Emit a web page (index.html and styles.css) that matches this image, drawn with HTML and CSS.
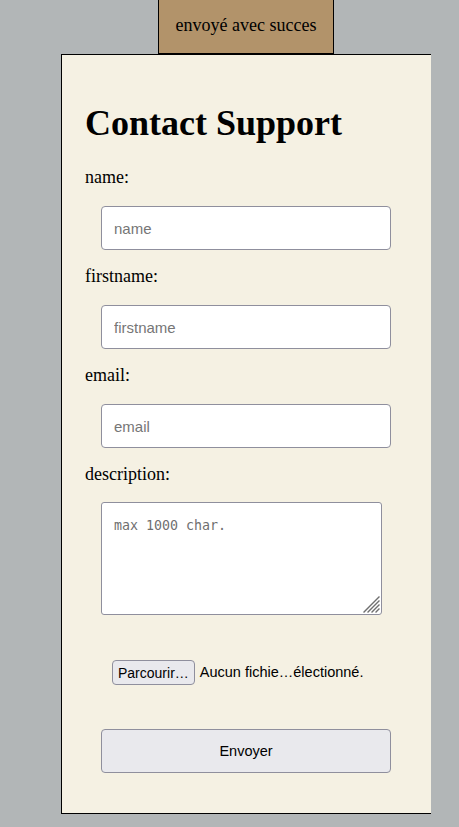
FILE: index.html
```html
<!DOCTYPE html>
<html lang="fr">
<head>
<meta charset="utf-8">
<title>Contact Support</title>
<link rel="stylesheet" href="styles.css">
</head>
<body>
  <div class="toast">envoyé avec succes</div>
  <main class="card">
    <h1 class="title">Contact Support</h1>
    <form class="form" onsubmit="return false">
      <div class="field">
        <label class="label" for="name">name:</label>
        <input class="input" id="name" type="text" placeholder="name">
      </div>
      <div class="field">
        <label class="label" for="firstname">firstname:</label>
        <input class="input" id="firstname" type="text" placeholder="firstname">
      </div>
      <div class="field">
        <label class="label" for="email">email:</label>
        <input class="input" id="email" type="text" placeholder="email">
      </div>
      <div class="field">
        <label class="label label-desc" for="description">description:</label>
        <div class="ta-wrap">
          <textarea class="textarea" id="description" placeholder="max 1000 char."></textarea>
          <svg class="grip" width="18" height="18" viewBox="0 0 18 18" aria-hidden="true">
            <g stroke="#6f6f6f" stroke-width="1.3" stroke-linecap="square">
              <line x1="2" y1="17" x2="17" y2="2"/>
              <line x1="6" y1="17" x2="17" y2="6"/>
              <line x1="10" y1="17" x2="17" y2="10"/>
              <line x1="14" y1="17" x2="17" y2="14"/>
            </g>
          </svg>
        </div>
      </div>
      <div class="file-row">
        <button type="button" class="file-btn">Parcourir…</button>
        <span class="file-name">Aucun fichie…électionné.</span>
      </div>
      <button type="submit" class="submit">Envoyer</button>
    </form>
  </main>
</body>
</html>
```
FILE: styles.css
```css
html, body {
  margin: 0;
  padding: 0;
}

body {
  background: #b2b6b7;
  font-family: "Liberation Serif", "Times New Roman", serif;
  font-size: 18px;
  line-height: 21px;
  color: #000;
  min-height: 827px;
}

.toast {
  margin-left: 158px;
  width: 174px;
  background: #b2936a;
  border: 1px solid #000;
  border-top: 0;
  text-align: center;
  padding: 15px 0 17px;
}

.card {
  display: block;
  margin-left: 61px;
  width: 346px;
  padding: 47px 0 40px 23px;
  background: #f5f1e3;
  border: 1px solid #000;
  border-right: 0;
}

.title {
  font-size: 36px;
  line-height: 42px;
  font-weight: bold;
  margin: 0 0 23px;
}

.form {
  display: flex;
  flex-direction: column;
}

.field {
  display: flex;
  flex-direction: column;
  align-items: flex-start;
}

.label {
  display: block;
  margin-bottom: 18px;
}

.label-desc {
  margin-bottom: 17px;
}

.input {
  display: block;
  margin: 0 0 16px 16px;
  width: 290px;
  height: 44px;
  box-sizing: border-box;
  padding: 0 12px;
  background: #fff;
  border: 1px solid #8f8f9d;
  border-radius: 4px;
  font-family: "Liberation Sans", Arial, sans-serif;
  font-size: 15px;
  color: #000;
  outline: none;
}

.input::placeholder {
  color: #767676;
  opacity: 1;
}

.ta-wrap {
  position: relative;
  margin-left: 16px;
  width: 281px;
  height: 113px;
}

.textarea {
  display: block;
  width: 100%;
  height: 100%;
  box-sizing: border-box;
  margin: 0;
  padding: 15px 12px;
  background: #fff;
  border: 1px solid #8f8f9d;
  border-radius: 3px;
  font-family: "DejaVu Sans Mono", monospace;
  font-size: 13.3px;
  line-height: 15px;
  resize: none;
  outline: none;
}

.textarea::placeholder {
  color: #6f6f6f;
  opacity: 1;
}

.grip {
  position: absolute;
  right: 2px;
  bottom: 2px;
  pointer-events: none;
}

.file-row {
  display: flex;
  align-items: center;
  margin-top: 45px;
  padding-left: 27px;
  font-family: "Liberation Sans", Arial, sans-serif;
  font-size: 14.5px;
}

.file-btn {
  height: 25px;
  box-sizing: border-box;
  padding: 0 5px;
  margin: 0;
  background: #e9e9ed;
  border: 1px solid #8f8f9d;
  border-radius: 4px;
  font-family: "Liberation Sans", Arial, sans-serif;
  font-size: 14px;
  color: #000;
}

.file-name {
  margin-left: 5px;
  color: #000;
}

.submit {
  display: block;
  margin: 44px 0 0 16px;
  width: 290px;
  height: 44px;
  box-sizing: border-box;
  background: #e9e9ed;
  border: 1px solid #8f8f9d;
  border-radius: 4px;
  font-family: "Liberation Sans", Arial, sans-serif;
  font-size: 14.5px;
  color: #000;
}
```
